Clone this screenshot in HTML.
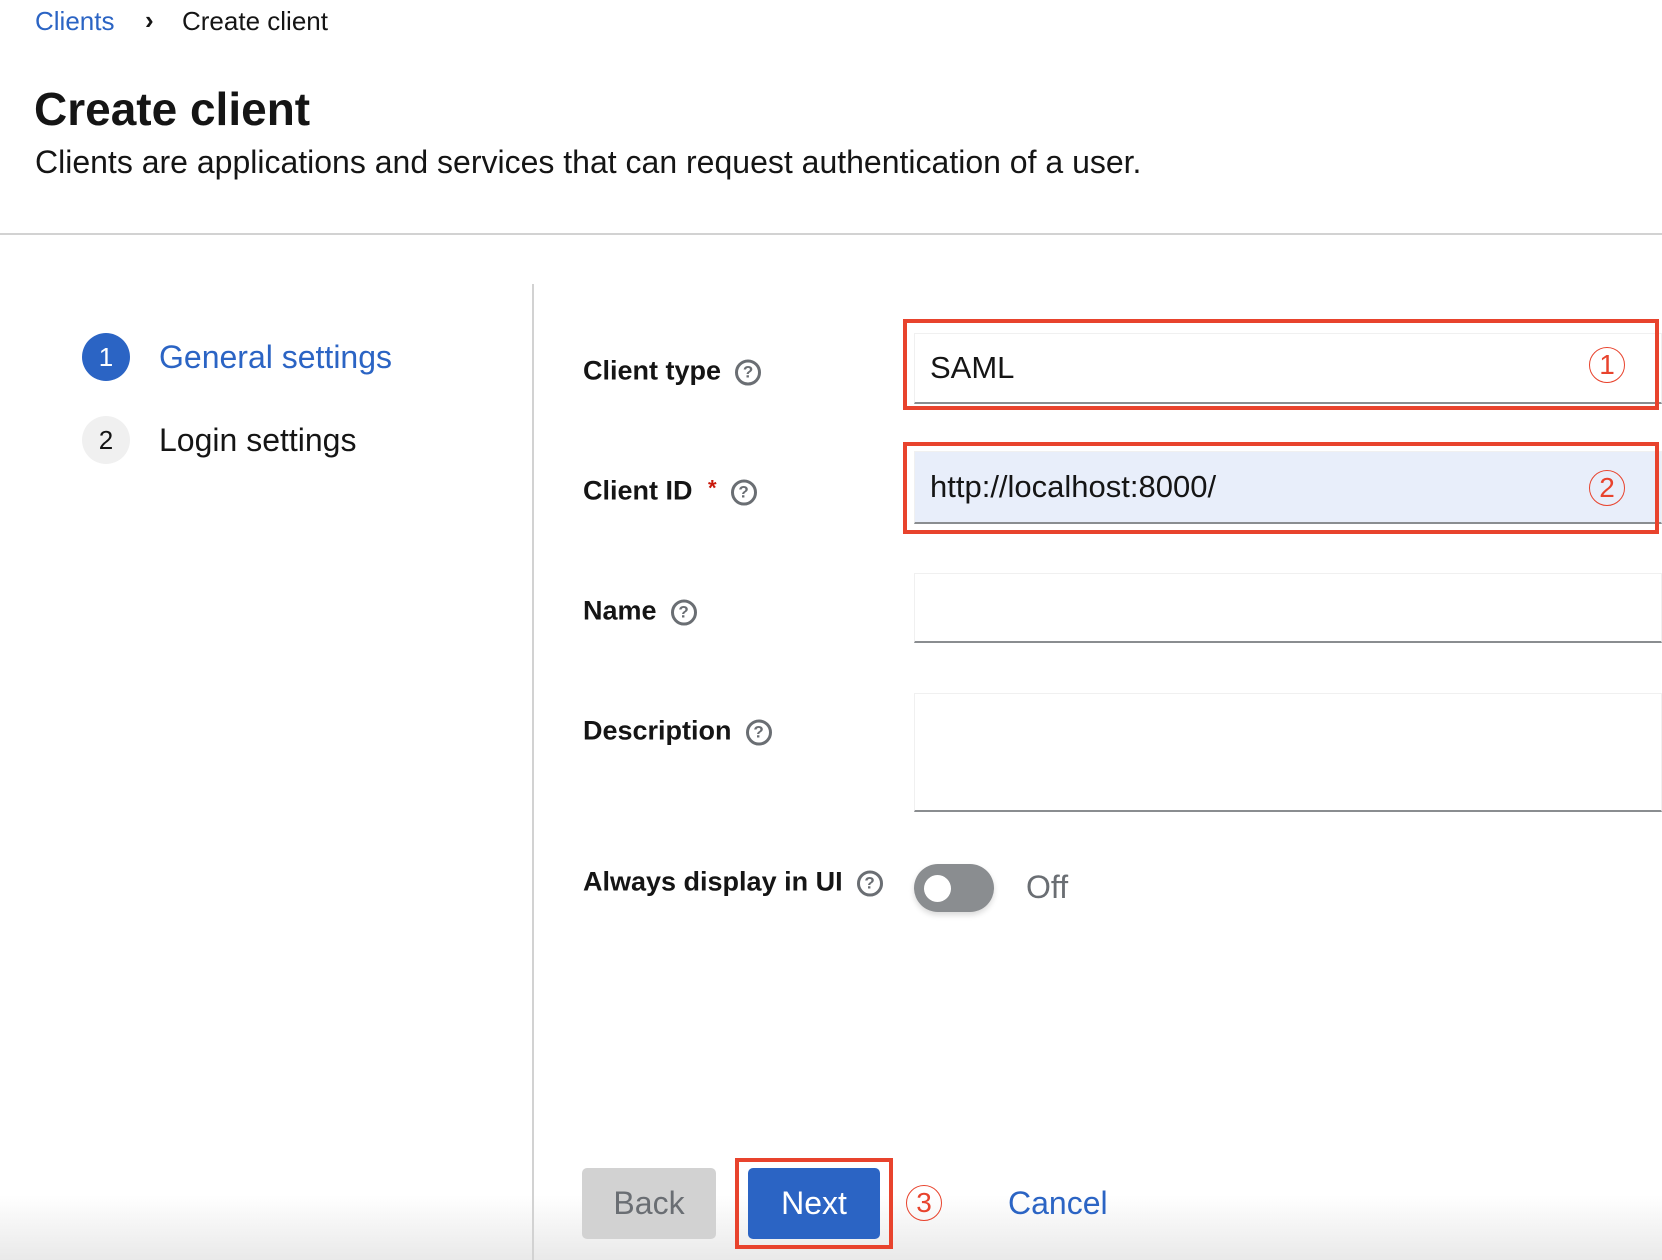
<!DOCTYPE html>
<html><head><meta charset="utf-8"><style>
*{margin:0;padding:0;box-sizing:border-box}
body{width:1662px;height:1260px;position:relative;overflow:hidden;background:#fff;font-family:"Liberation Sans","Noto Sans CJK JP",sans-serif;color:#151515}
.a{position:absolute;white-space:nowrap}
.lbl{font-weight:bold;font-size:27px;left:583px;transform:translateY(-50%)}
.q{display:inline-block;width:26px;height:26px;border:3px solid #6a6e73;border-radius:50%;color:#6a6e73;font-size:17px;font-weight:bold;text-align:center;line-height:20px;vertical-align:middle;margin-left:14px}
.inp{position:absolute;left:914px;right:0;border:1px solid #f0f0f0;border-bottom:2px solid #8a8d90;font-size:31px;padding-left:15px;display:flex;align-items:center}
.red{position:absolute;border:4px solid #e8432d}
.num{position:absolute;width:36px;height:36px;border:1.5px solid #e8432d;border-radius:50%;color:#e8432d;font-size:28px;text-align:center;line-height:33px;font-weight:normal}
</style></head><body>
<div class="a" style="left:35px;top:6px;font-size:26px;color:#2b64c4">Clients</div>
<div class="a" style="left:145px;top:5px;font-size:26px;font-weight:bold">›</div>
<div class="a" style="left:182px;top:6px;font-size:26px">Create client</div>
<div class="a" style="left:34px;top:82px;font-size:46px;font-weight:bold">Create client</div>
<div class="a" style="left:35px;top:144px;font-size:32px">Clients are applications and services that can request authentication of a user.</div>
<div class="a" style="left:0;top:233px;width:1662px;height:2px;background:#d2d2d2"></div>
<div class="a" style="left:532px;top:284px;width:2px;height:976px;background:#d2d2d2"></div>

<div class="a" style="left:82px;top:333px;width:48px;height:48px;border-radius:50%;background:#2b64c4;color:#fff;font-size:26px;text-align:center;line-height:48px">1</div>
<div class="a" style="left:159px;top:339px;font-size:32px;color:#2b64c4">General settings</div>
<div class="a" style="left:82px;top:416px;width:48px;height:48px;border-radius:50%;background:#f0f0f0;font-size:26px;text-align:center;line-height:48px">2</div>
<div class="a" style="left:159px;top:422px;font-size:32px">Login settings</div>

<div class="a lbl" style="top:371px">Client type<span class="q">?</span></div>
<div class="a lbl" style="top:491px">Client ID <span style="color:#c9190b;font-size:22px;vertical-align:top;margin-left:8px">*</span><span class="q">?</span></div>
<div class="a lbl" style="top:611px">Name<span class="q">?</span></div>
<div class="a lbl" style="top:731px">Description<span class="q">?</span></div>
<div class="a lbl" style="top:882px">Always display in UI<span class="q">?</span></div>

<div class="inp" style="top:333px;height:71px">SAML</div>
<div class="inp" style="top:451px;height:73px;background:#e8eefa">http://localhost:8000/</div>
<div class="inp" style="top:573px;height:70px"></div>
<div class="inp" style="top:693px;height:119px"></div>
<div class="red" style="left:903px;top:319px;width:756px;height:91px"></div>
<div class="red" style="left:903px;top:442px;width:756px;height:92px"></div>
<div class="num" style="left:1589px;top:347px">1</div>
<div class="num" style="left:1589px;top:470px">2</div>

<div class="a" style="left:914px;top:864px;width:80px;height:48px;border-radius:24px;background:#8a8d90;box-shadow:0 3px 6px rgba(0,0,0,.15)"></div>
<div class="a" style="left:924px;top:875px;width:27px;height:27px;border-radius:50%;background:#fff"></div>
<div class="a" style="left:1026px;top:869px;font-size:32px;color:#6a6e73">Off</div>

<div class="a" style="left:0;top:1195px;width:1662px;height:65px;background:linear-gradient(#fff,#e9e9e9)"></div>
<div class="a" style="left:532px;top:1195px;width:2px;height:65px;background:#d2d2d2"></div>
<div class="a" style="left:582px;top:1168px;width:134px;height:71px;border-radius:5px;background:#d2d2d2;color:#6a6e73;font-size:32px;text-align:center;line-height:71px">Back</div>
<div class="a" style="left:748px;top:1168px;width:132px;height:71px;border-radius:5px;background:#2b64c4;color:#fff;font-size:32px;text-align:center;line-height:71px">Next</div>
<div class="red" style="left:735px;top:1158px;width:158px;height:91px"></div>
<div class="num" style="left:906px;top:1185px">3</div>
<div class="a" style="left:1008px;top:1185px;font-size:32px;color:#2b64c4">Cancel</div>
</body></html>
